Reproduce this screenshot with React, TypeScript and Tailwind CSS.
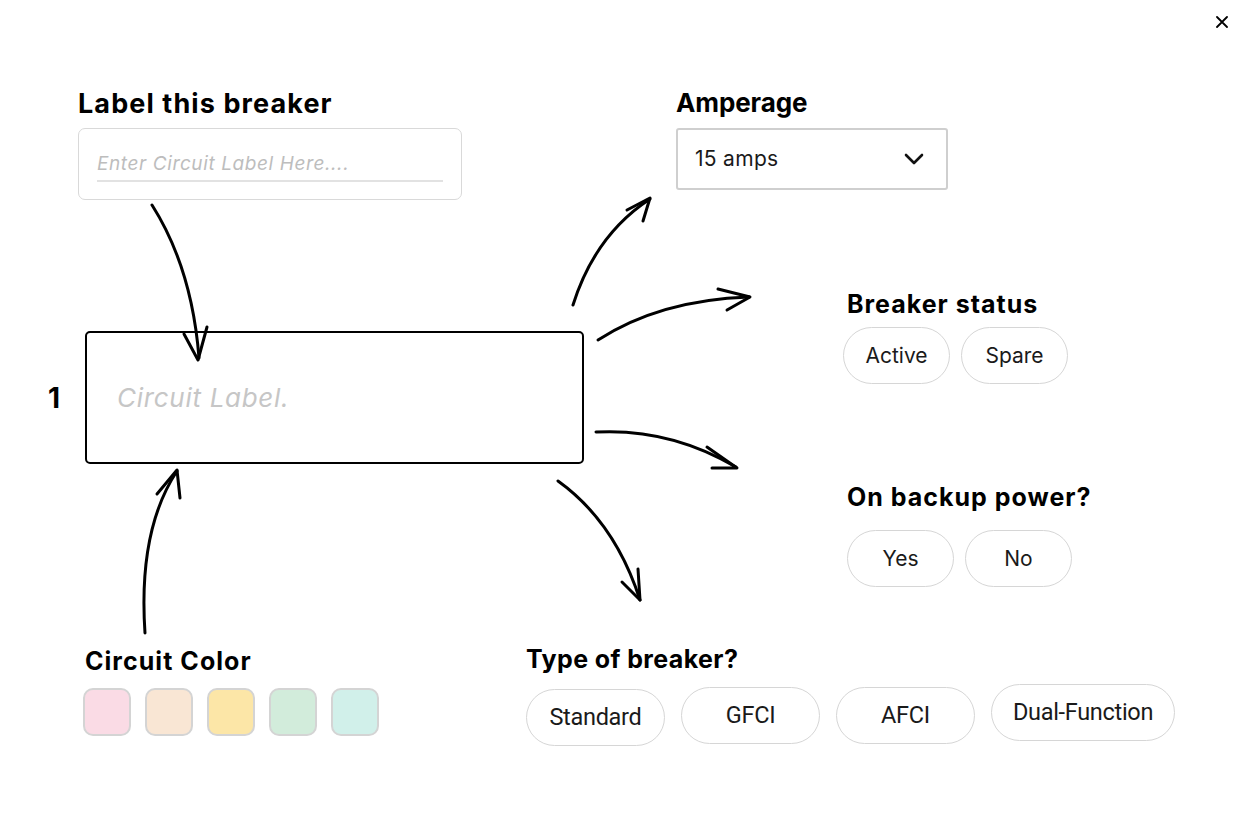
import React from "react";

const heading = "font-['Inter',sans-serif] font-bold text-black";
const pill =
  "flex items-center justify-center rounded-full border border-[#d6d6d6] bg-white text-[#1a1a1a] font-['Inter',sans-serif] text-[21px]";
const condensedPill =
  "flex items-center justify-center rounded-full border border-[#d6d6d6] bg-white text-[#1a1a1a] font-['Roboto',sans-serif] text-[23.5px] tracking-[-0.3px]";

function Arrow({ d, head }: { d: string; head: string }) {
  return (
    <g fill="none" stroke="#000" strokeWidth={3} strokeLinecap="round" strokeLinejoin="round">
      <path d={d} />
      <path d={head} />
    </g>
  );
}

function Arrows() {
  return (
    <svg className="pointer-events-none absolute inset-0" width={1260} height={840} viewBox="0 0 1260 840">
      {/* label input -> circuit box */}
      <Arrow d="M152 205 Q192 268 199 358" head="M184 334 L198 360 L207 327" />
      {/* color swatches -> circuit box */}
      <Arrow d="M145 633 Q138 530 177 471" head="M157 494 L177 470 L180 498" />
      {/* circuit box -> amperage */}
      <Arrow d="M573 305 Q595 235 650 199" head="M627 210 L650 198 L643 221" />
      {/* circuit box -> status */}
      <Arrow d="M598 340 Q660 300 749 297" head="M718 289 L750 297 L727 310" />
      {/* circuit box -> backup power */}
      <Arrow d="M596 432 Q670 428 736 467" head="M707 447 L737 468 L712 468" />
      {/* circuit box -> breaker type */}
      <Arrow d="M558 481 Q615 522 640 600" head="M622 582 L640 600 L638 569" />
    </svg>
  );
}

export default function App() {
  const swatches = ["#fadbe5", "#f9e6d4", "#fce6a7", "#d2ecdb", "#d1f0ea"];
  return (
    <div className="relative h-[840px] w-[1260px] overflow-hidden bg-white">
      {/* close */}
      <button className="absolute left-[1213px] top-[13px] flex h-[18px] w-[18px] items-center justify-center text-black">
        <svg width="12" height="12" viewBox="0 0 12 12">
          <path d="M1 1 L11 11 M11 1 L1 11" stroke="#000" strokeWidth="1.8" strokeLinecap="round" />
        </svg>
      </button>

      {/* label this breaker */}
      <div className="absolute left-[78px] top-[86px] w-[384px]">
        <h2 className={`${heading} text-[27px] leading-[36px] tracking-[1.1px]`}>Label this breaker</h2>
        <div className="mt-[6px] h-[72px] rounded-[7px] border border-[#d9d9d9] px-[18px] pt-[22px]">
          <div className="border-b-2 border-[#e2e2e2] pb-[4px] font-['Inter',sans-serif] text-[19px] italic leading-[25px] tracking-[0.6px] text-[#bdbdbd]">
            Enter Circuit Label Here....
          </div>
        </div>
      </div>

      {/* amperage */}
      <div className="absolute left-[676px] top-[86px] w-[272px]">
        <h2 className={`${heading} text-[26px] leading-[34px] tracking-[-0.1px]`}>Amperage</h2>
        <div className="mt-[8px] flex h-[62px] items-center justify-between rounded-[3px] border-2 border-[#cfcfcf] pl-[17px] pr-[22px]">
          <span className="font-['Inter',sans-serif] text-[21px] tracking-[0.3px] text-[#1a1a1a]">15 amps</span>
          <svg width="20" height="12" viewBox="0 0 20 12">
            <path d="M2 2 L10 10 L18 2" fill="none" stroke="#111" strokeWidth="2.6" strokeLinecap="round" strokeLinejoin="round" />
          </svg>
        </div>
      </div>

      {/* circuit preview */}
      <div className="absolute left-[48px] top-[331px] flex items-center">
        <span className={`${heading} w-[37px] text-[28px]`}>1</span>
        <div className="flex h-[133px] w-[499px] items-center rounded-[5px] border-2 border-black pl-[30px]">
          <span className="font-['Inter',sans-serif] text-[26px] italic tracking-[0.7px] text-[#c6c6c6]">Circuit Label.</span>
        </div>
      </div>

      {/* breaker status */}
      <div className="absolute left-[843px] top-[288px]">
        <h2 className={`${heading} ml-[4px] text-[25px] leading-[32px] tracking-[1px]`}>Breaker status</h2>
        <div className="mt-[7px] flex gap-[11px]">
          <div className={`${pill} h-[57px] w-[107px]`}>Active</div>
          <div className={`${pill} h-[57px] w-[107px]`}>Spare</div>
        </div>
      </div>

      {/* backup power */}
      <div className="absolute left-[847px] top-[480px]">
        <h2 className={`${heading} text-[25px] leading-[34px] tracking-[1px]`}>On backup power?</h2>
        <div className="mt-[16px] flex gap-[11px]">
          <div className={`${pill} h-[57px] w-[107px]`}>Yes</div>
          <div className={`${pill} h-[57px] w-[107px]`}>No</div>
        </div>
      </div>

      {/* circuit color */}
      <div className="absolute left-[83px] top-[644px]">
        <h2 className={`${heading} ml-[2px] text-[25px] leading-[34px] tracking-[1.05px]`}>Circuit Color</h2>
        <div className="mt-[10px] flex gap-[14px]">
          {swatches.map((c) => (
            <div
              key={c}
              className="h-[48px] w-[48px] rounded-[10px] border-2 border-[#d4d4d4]"
              style={{ backgroundColor: c }}
            />
          ))}
        </div>
      </div>

      {/* breaker type */}
      <div className="absolute left-[526px] top-[642px]">
        <h2 className={`${heading} text-[25px] leading-[34px] tracking-[0.4px]`}>Type of breaker?</h2>
        <div className="mt-[8px] flex items-start gap-[16px]">
          <div className={`${condensedPill} mt-[5px] h-[57px] w-[139px]`}>Standard</div>
          <div className={`${condensedPill} mt-[3px] h-[57px] w-[139px]`}>GFCI</div>
          <div className={`${condensedPill} mt-[3px] h-[57px] w-[139px]`}>AFCI</div>
          <div className={`${condensedPill} h-[57px] w-[184px]`}>Dual-Function</div>
        </div>
      </div>

      <Arrows />
    </div>
  );
}
